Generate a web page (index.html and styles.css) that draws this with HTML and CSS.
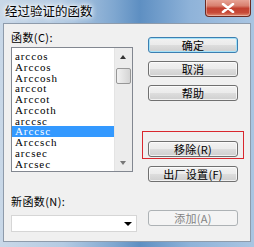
FILE: index.html
```
<!DOCTYPE html>
<html>
<head>
<meta charset="utf-8">
<link rel="stylesheet" href="styles.css">
</head>
<body>
<div class="window">
  <div class="titlebar">
    <span class="title">经过验证的函数</span>
    <div class="close"><svg width="14" height="10" viewBox="0 0 14 10"><path d="M2 1 L12 9 M12 1 L2 9" stroke="#fff" stroke-width="2.6" stroke-linecap="round"/></svg></div>
  </div>
  <div class="client">
    <div class="left">
      <div class="label">函数(C):</div>
      <div class="listbox">
        <div class="items">
          <div class="item">arccos</div>
          <div class="item">Arccos</div>
          <div class="item">Arccosh</div>
          <div class="item">arccot</div>
          <div class="item">Arccot</div>
          <div class="item">Arccoth</div>
          <div class="item">arccsc</div>
          <div class="item selected">Arccsc</div>
          <div class="item">Arccsch</div>
          <div class="item">arcsec</div>
          <div class="item">Arcsec</div>
        </div>
        <div class="scrollbar">
          <div class="arrow up"></div>
          <div class="thumb"></div>
          <div class="track"></div>
          <div class="arrow down"></div>
        </div>
      </div>
      <div class="label label2">新函数(N):</div>
      <div class="combo"><div class="combo-arrow"></div></div>
    </div>
    <div class="right">
      <div class="btn default">确定</div>
      <div class="btn gap8">取消</div>
      <div class="btn gap8">帮助</div>
      <div class="btn remove">移除(R)</div>
      <div class="btn gap9">出厂设置(F)</div>
      <div class="btn disabled add">添加(A)</div>
    </div>
    <div class="highlight-box"></div>
  </div>
</div>
</body>
</html>
```
FILE: styles.css
```
html, body { margin: 0; padding: 0; }
body { width: 254px; height: 247px; overflow: hidden; font-family: "Noto Sans CJK SC", "Liberation Sans", sans-serif; }
.window {
  width: 254px; height: 247px; box-sizing: border-box;
  background: linear-gradient(90deg, #c9d8e8 0%, #b4cbe3 25%, #7fa7d0 45%, #5e8fc2 55%, #8fb3d9 75%, #a9c5e2 100%);
  display: flex; flex-direction: column;
}
.titlebar { height: 23px; position: relative; flex: none; }
.title {
  position: absolute; left: 5px; top: 3px; font-size: 12.5px; line-height: 16px; color: #000;
  text-shadow: 0 0 6px #fff, 0 0 6px #fff, 0 0 3px #fff;
}
.close {
  position: absolute; left: 205px; top: -1px; width: 44px; height: 17px;
  border: 1px solid #6b2a22; border-top: none; border-radius: 0 0 4px 4px;
  background: linear-gradient(180deg, #e9a99b 0%, #d8806f 40%, #c2402f 55%, #c74a38 80%, #e08c72 100%);
  display: flex; align-items: center; justify-content: center;
  box-shadow: inset 0 0 0 1px rgba(255,255,255,0.35);
}
.client {
  position: relative; flex: none;
  margin: 0 3px; height: 219px; box-sizing: border-box;
  border: 1px solid #8e9bab; background: #f0f0f0;
  display: flex; padding: 0 0 0 7px;
}
.left { width: 126px; display: flex; flex-direction: column; }
.label { font-size: 11px; line-height: 14px; margin-top: 6px; height: 14px; color: #000; letter-spacing: 0.4px; }
.listbox {
  margin-top: 3px; width: 122px; height: 125px; box-sizing: border-box;
  border: 1px solid #828790; background: #fff; display: flex;
}
.items { flex: 1; padding-top: 3px; overflow: hidden; }
.item {
  font-family: "Liberation Serif", "DejaVu Serif", serif; font-size: 11px; letter-spacing: 0.9px;
  height: 10.75px; line-height: 10.75px; padding-left: 3px; color: #000;
}
.item.selected { background: #3399ff; color: #fff; }
.scrollbar { width: 17px; display: flex; flex-direction: column; background: #ececec; border-left: 1px solid #e4e4e4; }
.arrow { height: 15px; position: relative; }
.arrow.up::after {
  content: ""; position: absolute; left: 5px; top: 7px;
  border-left: 3.5px solid transparent; border-right: 3.5px solid transparent; border-bottom: 4px solid #333;
}
.arrow.down::after {
  content: ""; position: absolute; left: 5px; top: 5px;
  border-left: 3.5px solid transparent; border-right: 3.5px solid transparent; border-top: 4px solid #777;
}
.thumb {
  margin: 5px 1px 0 1px; height: 14px; border: 1px solid #979797; border-radius: 2px;
  background: linear-gradient(90deg, #f1f1f1 0%, #e3e3e3 50%, #d4d4d4 100%);
}
.track { flex: 1; }
.label2 { margin-top: 22px; }
.combo {
  margin-top: 7px; width: 126px; height: 17px; box-sizing: border-box;
  border: 1px solid #d6d6d6; background: #fff; position: relative;
}
.combo-arrow {
  position: absolute; right: 4px; top: 6px;
  border-left: 4px solid transparent; border-right: 4px solid transparent; border-top: 4px solid #000;
}
.right { margin-left: 11px; width: 90px; display: flex; flex-direction: column; padding-top: 13px; }
.btn {
  height: 16px; box-sizing: border-box; border: 1px solid #707070; border-radius: 3px;
  background: linear-gradient(180deg, #f2f2f2 0%, #ebebeb 48%, #dddddd 52%, #cfcfcf 100%);
  font-size: 11px; line-height: 14px; text-align: center; color: #000; letter-spacing: 0.3px;
  box-shadow: inset 0 0 0 1px rgba(255,255,255,0.7);
}
.btn.default { border-color: #3c7fb1; box-shadow: inset 0 0 0 1px #a6e2f8; }
.gap8 { margin-top: 8px; }
.gap9 { margin-top: 9px; }
.remove { margin-top: 40px; }
.add { margin-top: 28px; }
.btn.disabled { border-color: #adb2b5; background: #f4f4f4; color: #838383; box-shadow: none; }
.highlight-box {
  position: absolute; left: 138px; top: 107px; width: 102px; height: 28px;
  box-sizing: border-box; border: 1px solid #d9272e;
}
```
